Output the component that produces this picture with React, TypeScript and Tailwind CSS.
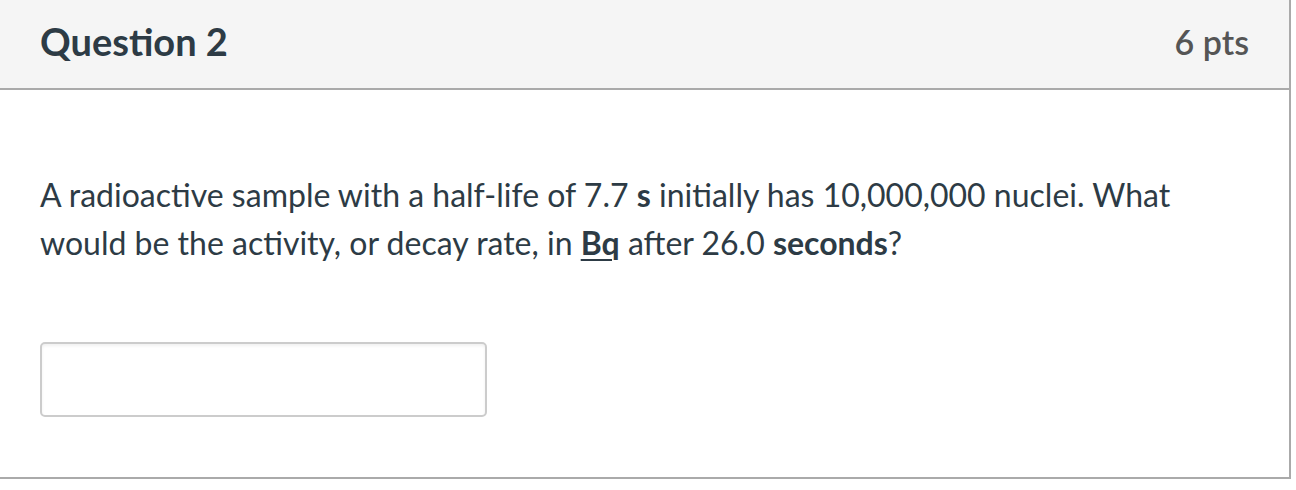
export default function App() {
  return (
    <div className="w-[1296px] h-[490px] bg-white" style={{ fontFamily: 'Lato, "Noto Sans", sans-serif' }}>
      <div className="w-[1291px] border-r-[2px] border-b-[2px] border-[#aaaaaa]">
        <div className="h-[90px] bg-[#f5f5f5] border-b-[2px] border-[#aaaaaa] flex items-center justify-between pl-[40px] pr-[40px]">
          <h2 className="text-[38px] font-bold text-[#2d3b45] leading-none pb-[6px]">Question 2</h2>
          <div className="text-[34px] font-semibold text-[#555555] leading-none pb-[4px]">6 pts</div>
        </div>
        <div className="px-[40px] pt-[81px] pb-[60px] text-[#2d3b45]">
          <p className="text-[32px] leading-[48px]">
            A radioactive sample with a half-life of 7.7 <strong className="font-bold">s</strong> initially has 10,000,000 nuclei. What
            <br />
            would be the activity, or decay rate, in <strong className="font-bold underline underline-offset-[4px] decoration-[2px]">Bq</strong> after 26.0 <strong className="font-bold">seconds</strong>?
          </p>
          <input
            type="text"
            className="mt-[75px] block w-[447px] h-[75px] border-[2px] border-[#cccccc] rounded-[5px] bg-white shadow-[inset_0_2px_3px_rgba(0,0,0,0.06)]"
          />
        </div>
      </div>
    </div>
  );
}
